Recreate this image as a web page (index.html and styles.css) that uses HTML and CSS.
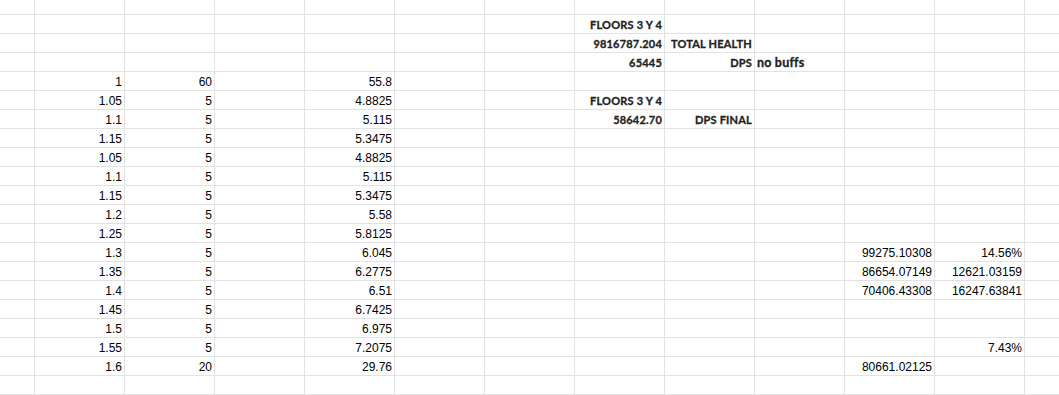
FILE: index.html
```html
<!DOCTYPE html>
<html lang="en">
<head>
<meta charset="utf-8">
<title>Sheet</title>
<link rel="stylesheet" href="styles.css">
</head>
<body>
<div class="sheet">
  <div class="row row-top"></div>
  <div class="row"><span class="cell col-h bold">FLOORS 3 Y 4</span></div>
  <div class="row"><span class="cell col-h bold">9816787.204</span><span class="cell col-i bold">TOTAL HEALTH</span></div>
  <div class="row"><span class="cell col-h bold">65445</span><span class="cell col-i bold">DPS</span><span class="cell col-j bold left">no buffs</span></div>
  <div class="row"><span class="cell col-b">1</span><span class="cell col-c">60</span><span class="cell col-e">55.8</span></div>
  <div class="row"><span class="cell col-b">1.05</span><span class="cell col-c">5</span><span class="cell col-e">4.8825</span><span class="cell col-h bold">FLOORS 3 Y 4</span></div>
  <div class="row"><span class="cell col-b">1.1</span><span class="cell col-c">5</span><span class="cell col-e">5.115</span><span class="cell col-h bold">58642.70</span><span class="cell col-i bold">DPS FINAL</span></div>
  <div class="row"><span class="cell col-b">1.15</span><span class="cell col-c">5</span><span class="cell col-e">5.3475</span></div>
  <div class="row"><span class="cell col-b">1.05</span><span class="cell col-c">5</span><span class="cell col-e">4.8825</span></div>
  <div class="row"><span class="cell col-b">1.1</span><span class="cell col-c">5</span><span class="cell col-e">5.115</span></div>
  <div class="row"><span class="cell col-b">1.15</span><span class="cell col-c">5</span><span class="cell col-e">5.3475</span></div>
  <div class="row"><span class="cell col-b">1.2</span><span class="cell col-c">5</span><span class="cell col-e">5.58</span></div>
  <div class="row"><span class="cell col-b">1.25</span><span class="cell col-c">5</span><span class="cell col-e">5.8125</span></div>
  <div class="row"><span class="cell col-b">1.3</span><span class="cell col-c">5</span><span class="cell col-e">6.045</span><span class="cell col-k">99275.10308</span><span class="cell col-l">14.56%</span></div>
  <div class="row"><span class="cell col-b">1.35</span><span class="cell col-c">5</span><span class="cell col-e">6.2775</span><span class="cell col-k">86654.07149</span><span class="cell col-l">12621.03159</span></div>
  <div class="row"><span class="cell col-b">1.4</span><span class="cell col-c">5</span><span class="cell col-e">6.51</span><span class="cell col-k">70406.43308</span><span class="cell col-l">16247.63841</span></div>
  <div class="row"><span class="cell col-b">1.45</span><span class="cell col-c">5</span><span class="cell col-e">6.7425</span></div>
  <div class="row"><span class="cell col-b">1.5</span><span class="cell col-c">5</span><span class="cell col-e">6.975</span></div>
  <div class="row"><span class="cell col-b">1.55</span><span class="cell col-c">5</span><span class="cell col-e">7.2075</span><span class="cell col-l">7.43%</span></div>
  <div class="row"><span class="cell col-b">1.6</span><span class="cell col-c">20</span><span class="cell col-e">29.76</span><span class="cell col-k">80661.02125</span></div>
  <div class="row"></div>
</div>
</body>
</html>
```
FILE: styles.css
```css
html, body {
  margin: 0;
  padding: 0;
  background: #ffffff;
}

body {
  overflow: hidden;
  font-family: "Liberation Sans", Arial, sans-serif;
  font-size: 12px;
  color: #000000;
}

.sheet {
  display: flex;
  flex-direction: column;
  width: 1059px;
  height: 395px;
  overflow: hidden;
  background-color: #ffffff;
  background-image:
    linear-gradient(to right, #e2e2e2 1px, transparent 1px),
    linear-gradient(to bottom, #e2e2e2 1px, transparent 1px);
  background-size: 90px 100%, 100% 19px;
  background-position: 34px 0, 0 14px;
}

.row {
  flex: 0 0 19px;
  height: 19px;
  display: grid;
  grid-template-columns: 35px repeat(11, 90px) 1fr;
  grid-template-rows: 18px;
}

.row-top {
  flex-basis: 15px;
  height: 15px;
}

.cell {
  grid-row: 1;
  line-height: 18px;
  padding: 1px 3px 0 3px;
  height: 17px;
  text-align: right;
  white-space: nowrap;
  overflow: hidden;
}

.bold {
  font-family: Lato, "Liberation Sans", sans-serif;
  font-weight: 700;
  font-size: 11px;
  letter-spacing: 0.2px;
  color: #222222;
  -webkit-text-stroke: 0.3px #222222;
}

.left {
  text-align: left;
  padding-left: 2px;
  font-size: 12.5px;
  letter-spacing: 0.2px;
}

.col-b { grid-column: 2; }
.col-c { grid-column: 3; }
.col-e { grid-column: 5; }
.col-h { grid-column: 8; }
.col-i { grid-column: 9; }
.col-j { grid-column: 10; }
.col-k { grid-column: 11; }
.col-l { grid-column: 12; }
```
